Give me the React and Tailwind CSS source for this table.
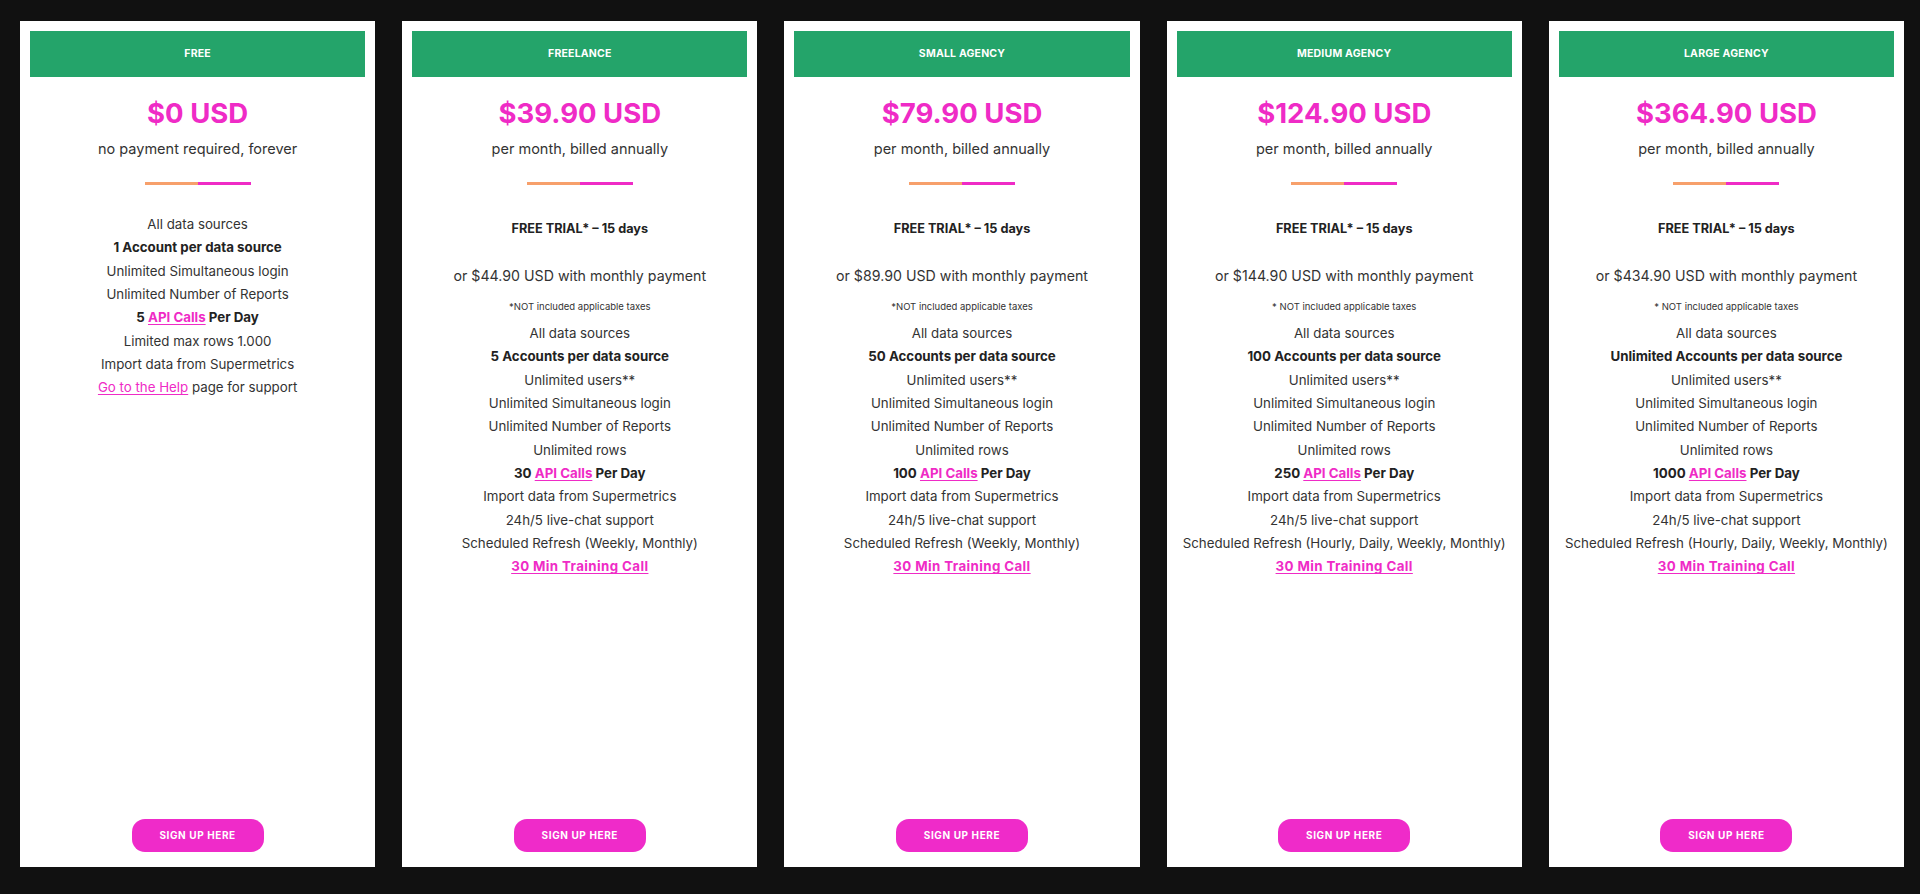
import React from "react";

const MAG = "text-[#ef2bc6]";

const Api = ({ n }) => (
  <span className="font-bold text-[#222]">
    {n}{" "}
    <a className={`${MAG} underline underline-offset-2`} href="#">API Calls</a> Per Day
  </span>
);

const Training = () => (
  <a className={`${MAG} font-bold underline underline-offset-2 tracking-[0.4px]`} href="#">30 Min Training Call</a>
);

const plans = [
  {
    name: "FREE",
    price: "$0 USD",
    sub: "no payment required, forever",
    free: true,
    features: [
      "All data sources",
      <b className="font-bold text-[#222]">1 Account per data source</b>,
      "Unlimited Simultaneous login",
      "Unlimited Number of Reports",
      <Api n="5" />,
      "Limited max rows 1.000",
      "Import data from Supermetrics",
      <span>
        <a className={`${MAG} underline underline-offset-2`} href="#">Go to the Help</a> page for support
      </span>,
    ],
  },
  {
    name: "FREELANCE",
    price: "$39.90 USD",
    monthly: "or $44.90 USD with monthly payment",
    tax: "*NOT included applicable taxes",
    accounts: "5 Accounts per data source",
    api: "30",
    refresh: "Scheduled Refresh (Weekly, Monthly)",
  },
  {
    name: "SMALL AGENCY",
    price: "$79.90 USD",
    monthly: "or $89.90 USD with monthly payment",
    tax: "*NOT included applicable taxes",
    accounts: "50 Accounts per data source",
    api: "100",
    refresh: "Scheduled Refresh (Weekly, Monthly)",
  },
  {
    name: "MEDIUM AGENCY",
    price: "$124.90 USD",
    monthly: "or $144.90 USD with monthly payment",
    tax: "* NOT included applicable taxes",
    accounts: "100 Accounts per data source",
    api: "250",
    refresh: "Scheduled Refresh (Hourly, Daily, Weekly, Monthly)",
  },
  {
    name: "LARGE AGENCY",
    price: "$364.90 USD",
    monthly: "or $434.90 USD with monthly payment",
    tax: "* NOT included applicable taxes",
    accounts: "Unlimited Accounts per data source",
    api: "1000",
    refresh: "Scheduled Refresh (Hourly, Daily, Weekly, Monthly)",
  },
];

function paidFeatures(p) {
  return [
    "All data sources",
    <b className="font-bold text-[#222]">{p.accounts}</b>,
    "Unlimited users**",
    "Unlimited Simultaneous login",
    "Unlimited Number of Reports",
    "Unlimited rows",
    <Api n={p.api} />,
    "Import data from Supermetrics",
    "24h/5 live-chat support",
    p.refresh,
    <Training />,
  ];
}

function Card({ p }) {
  const features = p.free ? p.features : paidFeatures(p);
  return (
    <div className="flex-1 min-w-0 bg-white flex flex-col items-center p-[10px] pb-[15px]">
      <div className="w-full h-[46px] bg-[#24a46a] flex items-center justify-center text-white font-bold text-[10.5px] tracking-[0.2px]">
        {p.name}
      </div>
      <div className={`mt-[18px] h-[36px] leading-[36px] text-[27.5px] font-bold ${MAG}`}>{p.price}</div>
      <div className="mt-[6px] h-[24px] leading-[24px] text-[14.5px] text-[#333]">
        {p.free ? p.sub : "per month, billed annually"}
      </div>
      <div className="mt-[21px] flex w-[106px] h-[3px]">
        <div className="flex-1 bg-[#f7a06b]" />
        <div className="flex-1 bg-[#ef2bc6]" />
      </div>
      {p.free ? (
        <div className="mt-[28px]" />
      ) : (
        <>
          <div className="mt-[34px] h-[20px] leading-[20px] text-[12.7px] font-bold text-[#222]">FREE TRIAL* – 15 days</div>
          <div className="mt-[25px] h-[24px] leading-[24px] text-[14.2px] text-[#333]">{p.monthly}</div>
          <div className="mt-[11px] h-[16px] leading-[16px] text-[9.5px] text-[#333]">{p.tax}</div>
          <div className="mt-[7px]" />
        </>
      )}
      <div className="flex flex-col items-center text-[13.3px] leading-[23.35px] text-[#333] text-center">
        {features.map((f, i) => (
          <div key={i}>{f}</div>
        ))}
      </div>
      <button className="mt-auto w-[132px] h-[33px] rounded-[13px] bg-[#ef2bc9] text-white font-bold text-[10px] tracking-[0.6px]">
        SIGN UP HERE
      </button>
    </div>
  );
}

export default function App() {
  return (
    <div
      className="w-[1920px] h-[894px] bg-[#111111] flex gap-[27px] pl-[20px] pr-[16px] pt-[21px] pb-[27px]"
      style={{ fontFamily: '"Inter", "Open Sans", sans-serif' }}
    >
      {plans.map((p) => (
        <Card key={p.name} p={p} />
      ))}
    </div>
  );
}
